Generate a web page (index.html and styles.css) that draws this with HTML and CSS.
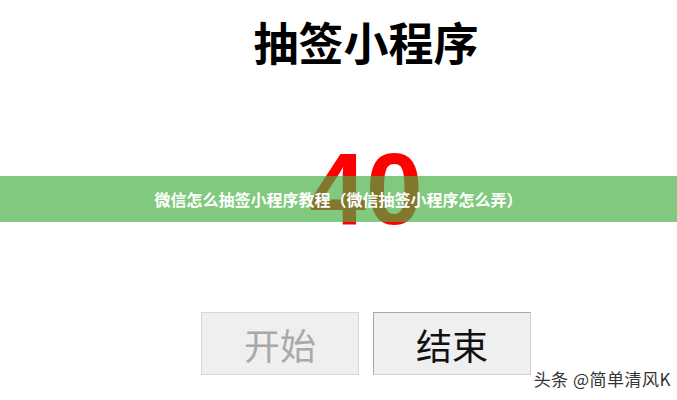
FILE: index.html
```html
<!DOCTYPE html>
<html lang="zh-CN">
<head>
    <meta charset="UTF-8">
    <meta name="viewport" content="width=device-width, initial-scale=1.0">
    <title>抽签小程序</title>
    <link rel="stylesheet" href="styles.css">
</head>
<body>
    <main>
        <section id="draw">
            <h1 id="title">抽签小程序</h1>
            <p id="number">40</p>
            <section id="controls">
                <button id="start" class="but" type="button" disabled>开始</button>
                <button id="stop" class="but" type="button">结束</button>
            </section>
        </section>
        <div class="banner">微信怎么抽签小程序教程（微信抽签小程序怎么弄）</div>
        <div class="mark">头条 @简单清风K</div>
    </main>
</body>
</html>
```

FILE: styles.css
```css
body{
    margin: 0;
    padding: 0;
    background: #fff;
}

main{
    position: relative;
    width: 677px;
    height: 400px;
    overflow: hidden;
    font-family: "Noto Sans CJK SC", "Noto Sans", sans-serif;
}

#draw{
    display: flex;
    flex-direction: column;
    align-items: center;
    padding-left: 55px;
}

#title{
    margin: 16px 0 0 0;
    font-size: 45px;
    line-height: 52px;
    font-weight: 700;
    color: #000;
}

#number{
    margin: 70px 0 0 0;
    font-family: "Liberation Sans", Arial, sans-serif;
    font-size: 102px;
    line-height: 102px;
    font-weight: 700;
    color: #ff0000;
}

#controls{
    display: flex;
    gap: 14px;
    margin-top: 72px;
}

.but{
    width: 158px;
    height: 63px;
    background-color: #efefef;
    border: 1px solid #d9d9d9;
    border-radius: 0;
    font-family: "Noto Sans CJK SC", sans-serif;
    font-size: 36px;
    padding: 0;
}

#start{
    color: #a9a9a9;
}

#stop{
    color: #111;
    border-color: #a8a8a8 #cfcfcf #cfcfcf #a8a8a8;
}

/* caption strip laid over the number */
.banner{
    position: absolute;
    left: 0;
    top: 176px;
    width: 100%;
    height: 46px;
    line-height: 46px;
    text-align: center;
    background: rgba(69, 176, 66, 0.68);
    color: #fff;
    font-size: 16px;
    font-weight: 700;
}

.mark{
    position: absolute;
    right: 6px;
    bottom: 9px;
    font-size: 17px;
    letter-spacing: 0.5px;
    color: #333;
    text-shadow: 0 0 2px #fff, 0 0 2px #fff;
}
```
